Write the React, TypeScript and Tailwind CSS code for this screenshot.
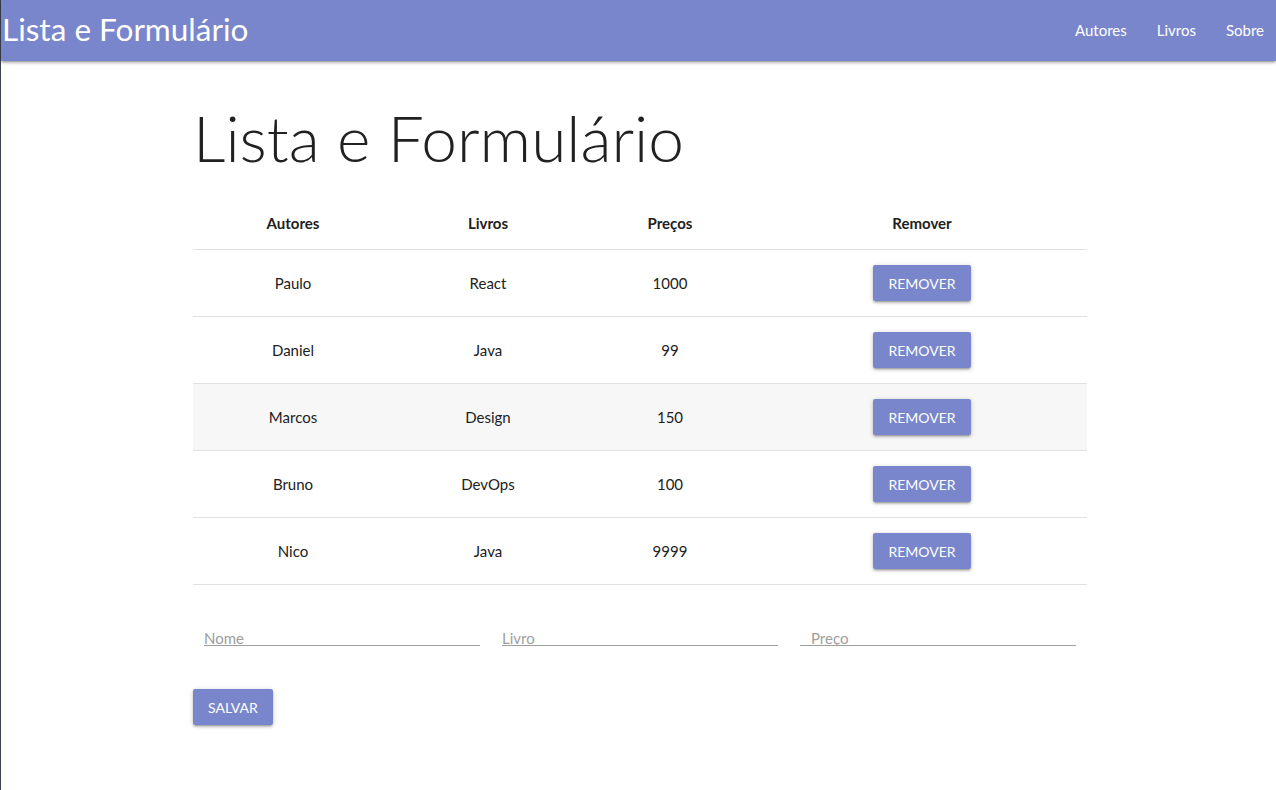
const autores = [
  {nome: "Paulo", livro: "React", preco: "1000"},
  {nome: "Daniel", livro: "Java", preco: "99"},
  {nome: "Marcos", livro: "Design", preco: "150"},
  {nome: "Bruno", livro: "DevOps", preco: "100"},
  {nome: "Nico", livro: "Java", preco: "9999"},
]

const shadow =
  "shadow-[0_2px_2px_0_rgba(0,0,0,0.14),0_3px_1px_-2px_rgba(0,0,0,0.12),0_1px_5px_0_rgba(0,0,0,0.2)]"

const Btn = ({children}: {children: React.ReactNode}) => (
  <button
    className={`h-9 px-[15px] rounded-[2px] bg-[#7986cb] text-white text-[14px] uppercase ${shadow}`}
  >
    {children}
  </button>
)

const Header = () => (
  <nav
    className={`h-[61px] bg-[#7986cb] text-white flex items-center justify-between ${shadow}`}
  >
    <a className="text-[31.5px] leading-none pl-[1px] pb-[2px]">Lista e Formulário</a>
    <ul className="flex text-[15px] pr-[1px]">
      <li className="px-[15px]">Autores</li>
      <li className="px-[15px]">Livros</li>
      <li className="pl-[15px] pr-[11px]">Sobre</li>
    </ul>
  </nav>
)

const cols = "grid grid-cols-[200px_190px_174px_330px] text-center items-center"

const Tabela = () => (
  <div className="text-[15px] text-[#212121]">
    <div className={`${cols} h-[54px] pt-[1px] border-b border-[#e0e0e0] font-bold`}>
      <div>Autores</div>
      <div>Livros</div>
      <div>Preços</div>
      <div>Remover</div>
    </div>
    {autores.map((a, i) => (
      <div
        key={i}
        className={`${cols} h-[67px] border-b border-[#e0e0e0] ${i === 2 ? "bg-[#f7f7f7]" : ""}`}
      >
        <div>{a.nome}</div>
        <div>{a.livro}</div>
        <div>{a.preco}</div>
        <div>
          <Btn>Remover</Btn>
        </div>
      </div>
    ))}
  </div>
)

const Campo = ({label, indent}: {label: string; indent?: boolean}) => (
  <div className="px-[11px]">
    <input
      placeholder={label}
      className={`block w-full h-[26px] pt-[10px] leading-[16px] border-b border-[#9e9e9e] text-[15px] outline-none placeholder:text-[#9e9e9e] ${indent ? "pl-[11px]" : ""}`}
    />
  </div>
)

export default function App() {
  return (
    <div
      className="min-h-[790px] bg-white border-l border-[#3c4350]"
      style={{fontFamily: 'Lato, sans-serif'}}
    >
      <Header />
      <main className="w-[894px] ml-[192px]">
        <h1 className="text-[64px] font-light text-[#212121] leading-none mt-[45px] mb-[26px]">
          Lista e Formulário
        </h1>
        <Tabela />
        <form className="grid grid-cols-3 mt-[35px]">
          <Campo label="Nome" />
          <Campo label="Livro" />
          <Campo label="Preço" indent />
        </form>
        <div className="mt-[43px]">
          <Btn>Salvar</Btn>
        </div>
      </main>
    </div>
  )
}
